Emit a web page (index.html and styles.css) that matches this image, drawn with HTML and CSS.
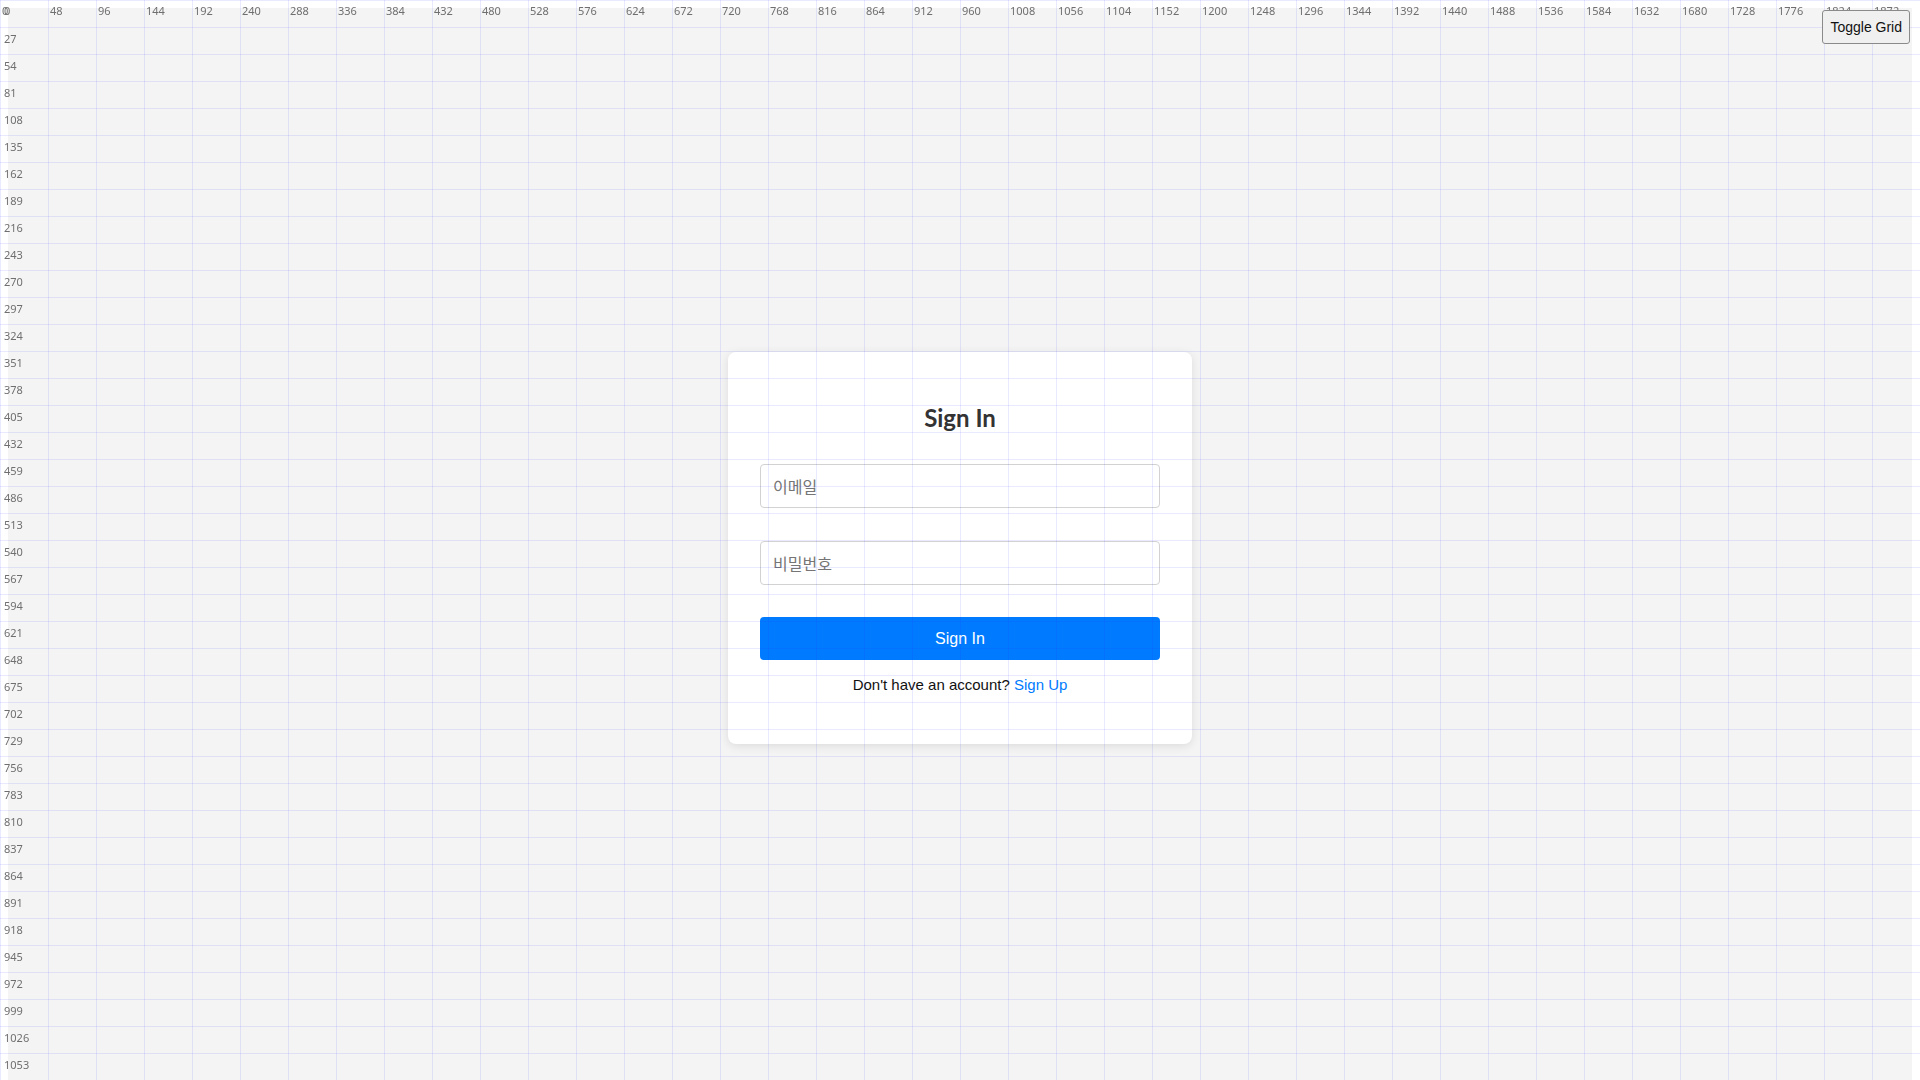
FILE: index.html
```html
<!DOCTYPE html>
<html lang="ko">
<head>
<meta charset="utf-8">
<title>Sign In</title>
<link rel="stylesheet" href="styles.css">
</head>
<body>
<div class="page">
  <div class="card">
    <h2 class="title">Sign In</h2>
    <form class="form">
      <input class="field" type="email" placeholder="이메일">
      <input class="field field-gap" type="password" placeholder="비밀번호">
      <button class="submit" type="button">Sign In</button>
    </form>
    <p class="switch">Don't have an account? <a class="link" href="#">Sign Up</a></p>
  </div>
</div>

<div class="grid-overlay">
  <div class="ruler-top">
    <span>0</span><span>48</span><span>96</span><span>144</span><span>192</span><span>240</span><span>288</span><span>336</span><span>384</span><span>432</span><span>480</span><span>528</span><span>576</span><span>624</span><span>672</span><span>720</span><span>768</span><span>816</span><span>864</span><span>912</span><span>960</span><span>1008</span><span>1056</span><span>1104</span><span>1152</span><span>1200</span><span>1248</span><span>1296</span><span>1344</span><span>1392</span><span>1440</span><span>1488</span><span>1536</span><span>1584</span><span>1632</span><span>1680</span><span>1728</span><span>1776</span><span>1824</span><span>1872</span>
  </div>
  <div class="ruler-left">
    <span>0</span><span>27</span><span>54</span><span>81</span><span>108</span><span>135</span><span>162</span><span>189</span><span>216</span><span>243</span><span>270</span><span>297</span><span>324</span><span>351</span><span>378</span><span>405</span><span>432</span><span>459</span><span>486</span><span>513</span><span>540</span><span>567</span><span>594</span><span>621</span><span>648</span><span>675</span><span>702</span><span>729</span><span>756</span><span>783</span><span>810</span><span>837</span><span>864</span><span>891</span><span>918</span><span>945</span><span>972</span><span>999</span><span>1026</span><span>1053</span>
  </div>
</div>

<button class="toggle" type="button">Toggle Grid</button>
</body>
</html>
```

FILE: styles.css
```css
html {
  background: #ffffff;
}

body {
  margin: 8px;
  font-family: "Liberation Sans", "Noto Sans CJK KR", sans-serif;
  color: #111;
}

.page {
  min-height: 100vh;
  background: #f4f4f4;
  display: flex;
  align-items: center;
  justify-content: center;
}

.card {
  width: 400px;
  padding: 32px;
  background: #ffffff;
  border-radius: 8px;
  box-shadow: 0 2px 10px rgba(0, 0, 0, 0.1);
}

.title {
  margin: 19px 0 0;
  line-height: 29px;
  font-family: Lato, "Open Sans", sans-serif;
  font-size: 24px;
  font-weight: 700;
  color: #333;
  text-align: center;
}

.form {
  margin: 32px 0 0;
  display: flex;
  flex-direction: column;
}

.field {
  box-sizing: border-box;
  width: 100%;
  height: 44px;
  margin: 0;
  padding: 0 12px;
  border: 1px solid #d2d2d2;
  border-radius: 4px;
  font-family: "Noto Sans CJK KR", "Noto Sans", sans-serif;
  font-size: 16px;
  color: #333;
  background: #fff;
  outline: none;
}

.field::placeholder {
  color: #757575;
}

.field-gap {
  margin-top: 33px;
}

.submit {
  margin-top: 32px;
  height: 43px;
  border: none;
  border-radius: 4px;
  background: #007bff;
  color: #ffffff;
  font-family: "Liberation Sans", "Noto Sans CJK KR", sans-serif;
  font-size: 16px;
  cursor: pointer;
}

.switch {
  margin: 14px 0 16px;
  line-height: 22px;
  font-size: 15px;
  text-align: center;
  color: #111;
}

.link {
  color: #007bff;
  text-decoration: none;
}

.grid-overlay {
  position: fixed;
  top: 0;
  left: 0;
  width: 100vw;
  height: 100vh;
  pointer-events: none;
  background-image:
    linear-gradient(to right, rgba(40, 40, 255, 0.1) 1px, transparent 1px),
    linear-gradient(to bottom, rgba(40, 40, 255, 0.1) 1px, transparent 1px);
  background-size: 48px 27px;
  font-family: "Noto Sans", sans-serif;
  font-size: 11px;
  color: #6f6f6f;
}

.ruler-top {
  display: flex;
  position: absolute;
  top: 0;
  left: 0;
}

.ruler-top span {
  width: 48px;
  flex: none;
  padding: 3px 0 0 2px;
  box-sizing: border-box;
  line-height: 15px;
}

.ruler-left {
  display: flex;
  flex-direction: column;
  position: absolute;
  top: 0;
  left: 0;
}

.ruler-left span {
  height: 27px;
  flex: none;
  padding: 3px 0 0 4px;
  box-sizing: border-box;
  line-height: 15px;
}

.ruler-left span:nth-child(n+2) {
  padding-top: 4px;
}

.toggle {
  position: fixed;
  top: 10px;
  right: 10px;
  padding: 8px 7px;
  font-family: "Liberation Sans", Arial, sans-serif;
  font-size: 14px;
  line-height: 16px;
  color: #111;
  background: #f0f0f0;
  border: 1px solid #8a8a8a;
  border-radius: 3px;
}
```
